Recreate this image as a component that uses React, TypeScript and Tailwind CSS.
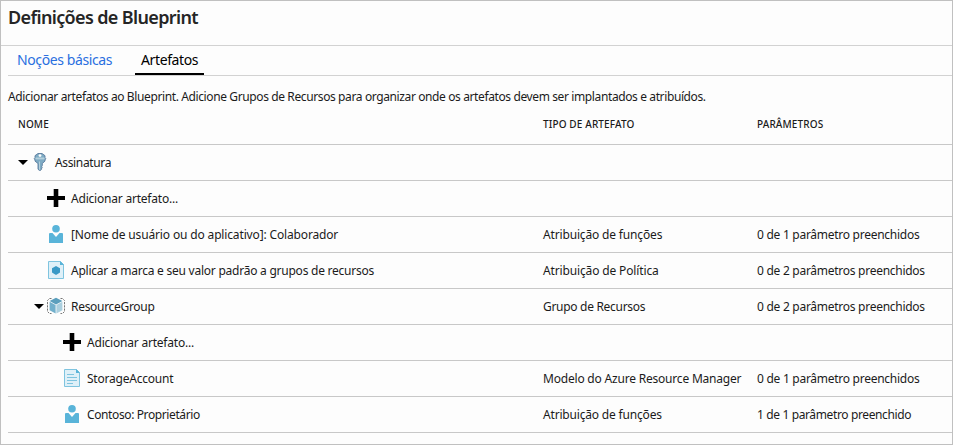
import type { ReactNode } from "react";

function KeyIcon() {
  return (
    <svg width="18" height="18" viewBox="0 0 18 18">
      <path d="M7 .5h4l3 2.200v2.100l.8.900-.8 1.200v1.200L11.300 10.500v2l-.7.800.7.900-.7.900v1.200L9.200 17.600h-.7L7 16.200v-5.700L4 8.100V6.900l-.8-1.200.8-.900V2.700z" fill="#7eabc4" stroke="#58799c" strokeWidth="0.9" />
      <path d="M4.500 4.500h9v1.900h-9z" fill="#b5d0dc" />
      <path d="M8 8.500v7.700l1 .8V8.500z" fill="#b5d0dc" />
      <circle cx="9" cy="2.600" r="1.400" fill="#fdfdfd" />
    </svg>
  );
}

function PlusIcon() {
  return (
    <svg width="18" height="18" viewBox="0 0 18 18">
      <path d="M6.700 0h4.600v6.900H18v4.200h-6.700V18H6.700v-6.900H0V6.900h6.700z" fill="#000" />
    </svg>
  );
}

function UserIcon() {
  return (
    <svg width="18" height="18" viewBox="0 0 18 18">
      <circle cx="9" cy="3.800" r="3.800" fill="#59b4d9" />
      <path d="M3 8.100h2.500L9 12l3.500-3.900H15q1 0 1 1V18H2V9.100q0-1 1-1z" fill="#59b4d9" />
    </svg>
  );
}

function PageShape() {
  return (
    <>
      <path d="M1.500.5h12l3 3v14h-15z" fill="#dff0f8" stroke="#7fc4df" />
      <path d="M13 0l4 4h-4z" fill="#59b4d9" />
    </>
  );
}

function PolicyIcon() {
  return (
    <svg width="18" height="18" viewBox="0 0 18 18">
      <PageShape />
      <path d="M9 5l4 2.200v4.400L9 13.900l-4-2.300V7.200z" fill="#3999c6" />
    </svg>
  );
}

function TemplateIcon() {
  return (
    <svg width="18" height="18" viewBox="0 0 18 18">
      <PageShape />
      <path d="M4 5.500h7M4 8.500h10M4 11.500h10M4 14.500h6" stroke="#7fc4df" />
    </svg>
  );
}

function GroupIcon() {
  return (
    <svg width="18" height="18" viewBox="0 0 18 18">
      <path d="M4.500 1.500H2.500L.5 3.500v11l2 2h2M13.500 1.500h2l2 2v11l-2 2h-2" fill="none" stroke="#777" strokeDasharray="2.200 1" />
      <path d="M9 .800l6.400 3.200L9 7.400 2.600 4z" fill="#5b9fbd" />
      <path d="M2.600 4.700l6 3.200v8.600l-6-3.300z" fill="#72b0cc" />
      <path d="M15.400 4.700l-6 3.200v8.600l6-3.300z" fill="#acd0df" />
    </svg>
  );
}

function Caret() {
  return (
    <svg width="10" height="5" viewBox="0 0 10 5">
      <path d="M0 0h10L5 5z" fill="#000" />
    </svg>
  );
}

type Row = {
  pad: string;
  open?: boolean;
  icon: ReactNode;
  name: string;
  nameCls: string;
  type?: string;
  typeCls?: string;
  params?: string;
  paramsCls?: string;
};

const rows: Row[] = [
  { pad: "pl-[10px]", open: true, icon: <KeyIcon />, name: "Assinatura", nameCls: "tracking-[-0.35px]" },
  { pad: "pl-[39px]", icon: <PlusIcon />, name: "Adicionar artefato...", nameCls: "tracking-[-0.21px]" },
  { pad: "pl-[39px]", icon: <UserIcon />, name: "[Nome de usuário ou do aplicativo]: Colaborador", nameCls: "tracking-[-0.15px]", type: "Atribuição de funções", typeCls: "tracking-[-0.16px]", params: "0 de 1 parâmetro preenchidos", paramsCls: "tracking-[-0.27px]" },
  { pad: "pl-[39px]", icon: <PolicyIcon />, name: "Aplicar a marca e seu valor padrão a grupos de recursos", nameCls: "tracking-[-0.24px]", type: "Atribuição de Política", typeCls: "tracking-[-0.14px]", params: "0 de 2 parâmetros preenchidos", paramsCls: "tracking-[-0.27px]" },
  { pad: "pl-[26px]", open: true, icon: <GroupIcon />, name: "ResourceGroup", nameCls: "tracking-[-0.3px]", type: "Grupo de Recursos", typeCls: "tracking-[-0.3px]", params: "0 de 2 parâmetros preenchidos", paramsCls: "tracking-[-0.27px]" },
  { pad: "pl-[55px]", icon: <PlusIcon />, name: "Adicionar artefato...", nameCls: "tracking-[-0.21px]" },
  { pad: "pl-[55px]", icon: <TemplateIcon />, name: "StorageAccount", nameCls: "tracking-[-0.22px]", type: "Modelo do Azure Resource Manager", typeCls: "tracking-[-0.2px]", params: "0 de 1 parâmetro preenchidos", paramsCls: "tracking-[-0.27px]" },
  { pad: "pl-[55px]", icon: <UserIcon />, name: "Contoso: Proprietário", nameCls: "tracking-[-0.39px]", type: "Atribuição de funções", typeCls: "tracking-[-0.18px]", params: "1 de 1 parâmetro preenchido", paramsCls: "tracking-[-0.37px]" },
];

export default function App() {
  return (
    <div className="flex h-[445px] w-[953px] flex-col overflow-hidden border border-[#c0c0c0] bg-[#fdfdfd] font-['Noto_Sans','Open_Sans',sans-serif] text-[12px] whitespace-nowrap text-[#1b1b1b]">
      <header className="h-[45px] shrink-0 border-b border-[#d2d2d2] pl-[7px]">
        <h1 className="text-[18px] leading-[32px] font-semibold tracking-[-0.64px] text-[#252525]">Definições de Blueprint</h1>
      </header>
      <div className="flex grow flex-col pl-[7px]">
        <nav className="flex h-[30px] shrink-0 border-b border-[#d2d2d2] text-[14px] leading-[28px]">
          <a className="ml-[9px] w-[118px] tracking-[-0.4px] text-[#2a6fe0]">Noções básicas</a>
          <a className="h-[29px] w-[69px] border-b-2 border-black pl-[6px] tracking-[-0.38px] text-black">Artefatos</a>
        </nav>
        <p className="h-[37px] shrink-0 pt-[12px] leading-[18px] tracking-[-0.385px]">
          Adicionar artefatos ao Blueprint. Adicione Grupos de Recursos para organizar onde os artefatos devem ser implantados e atribuídos.
        </p>
        <div className="flex h-[32px] shrink-0 border-b border-[#c8c8c8] text-[10px] leading-[23px] font-medium tracking-[0.13px]">
          <span className="w-[535px] pl-[10px]">NOME</span>
          <span className="w-[214px]">TIPO DE ARTEFATO</span>
          <span>PARÂMETROS</span>
        </div>
        {rows.map((r, i) => (
          <div key={i} className="flex h-[36px] shrink-0 items-center border-b border-[#c8c8c8]">
            <div className={"flex w-[535px] shrink-0 items-center " + r.pad}>
              {r.open && <span className="mr-[3px]"><Caret /></span>}
              <span className="mr-[6px] mb-px shrink-0">{r.icon}</span>
              <span className={r.nameCls}>{r.name}</span>
            </div>
            <div className={"w-[214px] shrink-0 " + (r.typeCls ?? "")}>{r.type}</div>
            <div className={r.paramsCls}>{r.params}</div>
          </div>
        ))}
      </div>
    </div>
  );
}
